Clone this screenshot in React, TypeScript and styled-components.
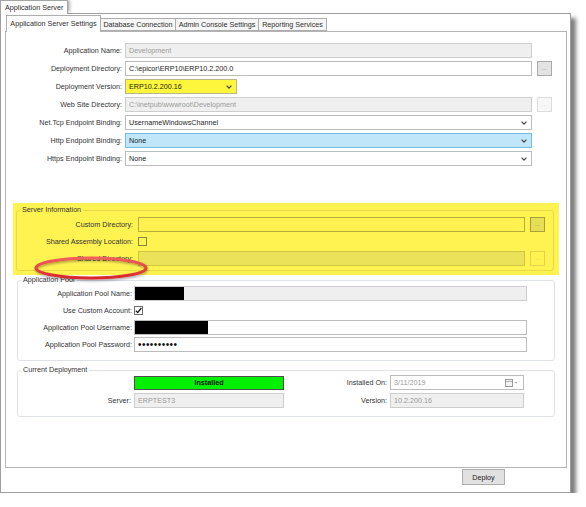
import styled, { createGlobalStyle } from "styled-components";

const GlobalStyle = createGlobalStyle`
  html, body {
    margin: 0;
    background: #fff;
  }
  body {
    font-family: "Liberation Sans", Arial, sans-serif;
    font-size: 7.2px;
    color: #2e2e2e;
  }
  * {
    box-sizing: border-box;
  }
`;

const Window = styled.div`
  width: 571px;
`;

const TitleTab = styled.div`
  position: relative;
  z-index: 1;
  display: flex;
  align-items: center;
  width: 68px;
  height: 14px;
  margin-bottom: -1px;
  padding-left: 4px;
  background: #fff;
  border: 1px solid #a4a4a4;
  border-bottom: none;
  box-shadow: 3px -1px 3px -1px rgba(0, 0, 0, 0.3);
  white-space: nowrap;
`;

const Frame = styled.div`
  display: flex;
  flex-direction: column;
  height: 480px;
  padding: 3px 3px 0 4px;
  border: 1px solid #9e9e9e;
  background: #fff;
  box-shadow: 5px 5px 4px rgba(0, 0, 0, 0.5);
`;

const TabStrip = styled.div`
  display: flex;
  align-items: flex-end;
  height: 14px;
  padding-left: 1px;
`;

const Tab = styled.div<{ $active?: boolean; $w: number }>`
  position: relative;
  display: flex;
  align-items: center;
  justify-content: center;
  width: ${(p) => p.$w}px;
  height: ${(p) => (p.$active ? 17 : 13)}px;
  margin-left: ${(p) => (p.$active ? 0 : -1)}px;
  margin-bottom: ${(p) => (p.$active ? -1 : 0)}px;
  border: 1px solid #adadad;
  border-bottom: ${(p) => (p.$active ? "none" : "1px solid #adadad")};
  background: ${(p) => (p.$active ? "#fff" : "#f6f6f6")};
  z-index: ${(p) => (p.$active ? 1 : 0)};
  white-space: nowrap;
  padding-bottom: ${(p) => (p.$active ? 2 : 0)}px;
`;

const Panel = styled.div`
  position: relative;
  height: 437px;
  padding-top: 11px;
  border: 1px solid #b4b4b4;
  background: #fff;
`;

const Footer = styled.div`
  display: flex;
  justify-content: flex-end;
  padding: 1px 62px 0 0;
`;

const PushButton = styled.div`
  display: flex;
  align-items: center;
  justify-content: center;
  width: 43px;
  height: 16px;
  border: 1px solid #adadad;
  background: #e1e1e1;
  color: #222;
`;

const FormGrid = styled.div<{ $cols: string; $gap: number; $rowGap: number }>`
  display: grid;
  grid-template-columns: ${(p) => p.$cols};
  column-gap: ${(p) => p.$gap}px;
  row-gap: ${(p) => p.$rowGap}px;
  grid-auto-rows: 15px;
  align-items: center;
`;

const Label = styled.div`
  text-align: right;
  white-space: nowrap;
  color: #333;
`;

const Field = styled.div<{ $tone?: "plain" | "disabled" | "yellow" | "blue" | "hiYellow" | "hiDisabled"; $w?: number; $muted?: boolean }>`
  display: flex;
  align-items: center;
  justify-content: space-between;
  height: 100%;
  width: ${(p) => (p.$w ? `${p.$w}px` : "100%")};
  padding: 0 4px 0 3px;
  white-space: nowrap;
  overflow: hidden;
  border: 1px solid
    ${(p) =>
      ({
        plain: "#bcbcbc",
        disabled: "#cdcdcd",
        yellow: "#b9b58a",
        blue: "#72bde8",
        hiYellow: "#b8ac37",
        hiDisabled: "#d1c541",
      })[p.$tone || "plain"]};
  background: ${(p) =>
    ({
      plain: "#fff",
      disabled: "#efefef",
      yellow: "#fdf63c",
      blue: "#c0e6fa",
      hiYellow: "#fff250",
      hiDisabled: "#ece25a",
    })[p.$tone || "plain"]};
  color: ${(p) =>
    p.$muted || p.$tone === "disabled" || p.$tone === "hiDisabled" ? "#9b9b9b" : "#1e1e1e"};
`;

const Redacted = styled.div<{ $w: number }>`
  width: ${(p) => p.$w}px;
  height: 100%;
  margin-left: -3px;
  background: #000;
`;

const Dots = styled.span`
  font-size: 10px;
  letter-spacing: 0.45px;
  line-height: 1;
  color: #111;
`;

const BrowseButton = styled.div<{ $disabled?: boolean; $hi?: boolean }>`
  display: flex;
  align-items: center;
  justify-content: center;
  width: 15px;
  height: 15px;
  margin-left: ${(p) => (p.$hi ? 0 : 2)}px;
  font-size: 5px;
  letter-spacing: 0.3px;
  padding-bottom: 2px;
  color: ${(p) => (p.$disabled ? "#bbb" : "#666")};
  border: 1px solid
    ${(p) => (p.$hi ? (p.$disabled ? "#e0d44a" : "#a89f3a") : p.$disabled ? "#dcdcdc" : "#a9a9a9")};
  background: ${(p) =>
    p.$hi ? (p.$disabled ? "transparent" : "#e8de55") : p.$disabled ? "#f7f7f7" : "#e3e3e3"};
`;

const Check = styled.div<{ $hi?: boolean }>`
  display: flex;
  align-items: center;
  justify-content: center;
  width: 9px;
  height: 9px;
  border: 1px solid ${(p) => (p.$hi ? "#8c8640" : "#6c6c6c")};
  background: ${(p) => (p.$hi ? "transparent" : "#fff")};
`;

const Highlight = styled.div`
  margin: 37px 7px 0 7px;
  padding: 2px 5px 4px 3px;
  background: #fff352;
`;

const GroupBox = styled.fieldset<{ $pad: string; $margin: string; $hi?: boolean }>`
  min-width: 0;
  margin: ${(p) => p.$margin};
  padding: ${(p) => p.$pad};
  border: 1px solid ${(p) => (p.$hi ? "#e6da48" : "#dfe3e8")};
  border-radius: 3px;
`;

const Legend = styled.legend`
  margin-left: 3px;
  padding: 0 2px;
  line-height: 10px;
  font-size: 7.2px;
  color: #333;
`;

const Status = styled.div`
  display: flex;
  align-items: center;
  justify-content: center;
  height: 14px;
  border: 1px solid #4d4d4d;
  background: #00f000;
  font-weight: bold;
  color: #111;
`;

const Annotation = styled.svg`
  position: absolute;
  left: 27px;
  top: 222px;
  pointer-events: none;
`;

function Chevron() {
  return (
    <svg width="6" height="4" viewBox="0 0 6 4">
      <path d="M0.6 0.7 L3 3.1 L5.4 0.7" fill="none" stroke="#444" strokeWidth="1.2" />
    </svg>
  );
}

function CalendarIcon() {
  return (
    <svg width="14" height="8" viewBox="0 0 14 8">
      <rect x="0.5" y="0.5" width="7" height="7" fill="#f3f3f3" stroke="#9a9a9a" />
      <line x1="1" y1="2.5" x2="7" y2="2.5" stroke="#b5b5b5" />
      <path d="M9.5 3 L11 4.6 L12.5 3 Z" fill="#9a9a9a" />
    </svg>
  );
}

export default function App() {
  return (
    <Window>
      <GlobalStyle />
      <TitleTab>Application Server</TitleTab>
      <Frame>
        <TabStrip>
          <Tab $active $w={95}>Application Server Settings</Tab>
          <Tab $w={76}>Database Connection</Tab>
          <Tab $w={84}>Admin Console Settings</Tab>
          <Tab $w={69}>Reporting Services</Tab>
        </TabStrip>
        <Panel>
          <FormGrid $cols="116px 407px 20px" $gap={3} $rowGap={3}>
            <Label>Application Name:</Label>
            <Field $tone="disabled">Development</Field>
            <span />

            <Label>Deployment Directory:</Label>
            <Field>C:\epicor\ERP10\ERP10.2.200.0</Field>
            <BrowseButton>...</BrowseButton>

            <Label>Deployment Version:</Label>
            <Field $tone="yellow" $w={112}>
              ERP10.2.200.16
              <Chevron />
            </Field>
            <span />

            <Label>Web Site Directory:</Label>
            <Field $tone="disabled">C:\inetpub\wwwroot\Development</Field>
            <BrowseButton $disabled>...</BrowseButton>

            <Label>Net.Tcp Endpoint Binding:</Label>
            <Field>
              UsernameWindowsChannel
              <Chevron />
            </Field>
            <span />

            <Label>Http Endpoint Binding:</Label>
            <Field $tone="blue">
              None
              <Chevron />
            </Field>
            <span />

            <Label>Https Endpoint Binding:</Label>
            <Field>
              None
              <Chevron />
            </Field>
            <span />
          </FormGrid>

          <Highlight>
            <GroupBox $hi $margin="0" $pad="2px 7px 4px 0">
              <Legend>Server Information</Legend>
              <FormGrid $cols="116px 387px 15px" $gap={5} $rowGap={2}>
                <Label>Custom Directory:</Label>
                <Field $tone="hiYellow" />
                <BrowseButton $hi>...</BrowseButton>

                <Label>Shared Assembly Location:</Label>
                <Check $hi />
                <span />

                <Label>Shared Directory:</Label>
                <Field $tone="hiDisabled" />
                <BrowseButton $hi $disabled>...</BrowseButton>
              </FormGrid>
            </GroupBox>
          </Highlight>

          <GroupBox $margin="0 11px 0 11px" $pad="1px 26px 8px 0">
            <Legend>Application Pool</Legend>
            <FormGrid $cols="114px 393px" $gap={2} $rowGap={2}>
              <Label>Application Pool Name:</Label>
              <Field $tone="disabled">
                <Redacted $w={49} />
              </Field>

              <Label>Use Custom Account:</Label>
              <Check>
                <svg width="7" height="7" viewBox="0 0 7 7">
                  <path d="M0.8 3.6 L2.7 5.6 L6.3 1" fill="none" stroke="#111" strokeWidth="1.3" />
                </svg>
              </Check>

              <Label>Application Pool Username:</Label>
              <Field>
                <Redacted $w={73} />
              </Field>

              <Label>Application Pool Password:</Label>
              <Field>
                <Dots>••••••••••</Dots>
              </Field>
            </FormGrid>
          </GroupBox>

          <GroupBox $margin="4px 11px 0 11px" $pad="0 29px 8px 0">
            <Legend>Current Deployment</Legend>
            <FormGrid $cols="113px 150px 100px 134px" $gap={3} $rowGap={3}>
              <span />
              <Status>Installed</Status>
              <Label>Installed On:</Label>
              <Field $muted>
                3/11/2019
                <CalendarIcon />
              </Field>

              <Label>Server:</Label>
              <Field $tone="disabled">ERPTEST3</Field>
              <Label>Version:</Label>
              <Field $tone="disabled">10.2.200.16</Field>
            </FormGrid>
          </GroupBox>

          <Annotation width="124" height="30" viewBox="0 0 124 30">
            <defs>
              <filter id="sh" x="-10%" y="-30%" width="120%" height="160%">
                <feDropShadow dx="0.5" dy="1.5" stdDeviation="0.8" floodColor="#000" floodOpacity="0.35" />
              </filter>
              <linearGradient id="rg" x1="0" y1="0" x2="0" y2="1">
                <stop offset="0" stopColor="#f0605c" />
                <stop offset="1" stopColor="#d8282c" />
              </linearGradient>
            </defs>
            <ellipse cx="58" cy="14" rx="55" ry="10" fill="none" stroke="url(#rg)" strokeWidth="3" filter="url(#sh)" />
          </Annotation>
        </Panel>
        <Footer>
          <PushButton>Deploy</PushButton>
        </Footer>
      </Frame>
    </Window>
  );
}
